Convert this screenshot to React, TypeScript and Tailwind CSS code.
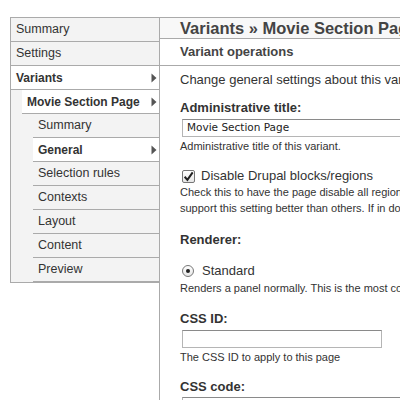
import React from 'react';

type Item = { label: string; level: 0 | 1 | 2; active?: boolean; bold?: boolean; arrow?: boolean };

const items: Item[] = [
  { label: 'Summary', level: 0 },
  { label: 'Settings', level: 0 },
  { label: 'Variants', level: 0, active: true, bold: true, arrow: true },
  { label: 'Movie Section Page', level: 1, active: true, bold: true, arrow: true },
  { label: 'Summary', level: 2 },
  { label: 'General', level: 2, active: true, bold: true, arrow: true },
  { label: 'Selection rules', level: 2 },
  { label: 'Contexts', level: 2 },
  { label: 'Layout', level: 2 },
  { label: 'Content', level: 2 },
  { label: 'Preview', level: 2 },
];

function Arrow() {
  return (
    <svg width="6" height="10" viewBox="0 0 6 10" className="shrink-0">
      <path d="M0.5 0.5 L5.5 5 L0.5 9.5 Z" fill="#555" />
    </svg>
  );
}

function NavRow({ item }: { item: Item }) {
  const indent = item.level === 0 ? '' : item.level === 1 ? 'ml-[11px]' : 'ml-[22px]';
  return (
    <div
      className={`h-[24px] flex items-center justify-between pl-[5px] pr-[2px] border-b border-[#aaa] text-[12.5px] text-[#333] ${indent} ${
        item.active ? 'bg-white' : 'bg-[#f3f3f3]'
      } ${item.bold ? 'font-bold text-[#222] text-[12px]' : ''}`}
    >
      <span>{item.label}</span>
      {item.arrow && <Arrow />}
    </div>
  );
}

export default function App() {
  return (
    <div className="w-[400px] h-[400px] overflow-hidden bg-white pt-[17px] pl-[10px] font-['Liberation_Sans',Arial,sans-serif] text-[#333]">
      <div className="flex border-t border-[#aaa] h-full">
        <nav className="w-[149px] shrink-0 self-start border-l border-b border-[#aaa] bg-[#f3f3f3]">
          {items.map((it, i) => (
            <NavRow key={i} item={it} />
          ))}
        </nav>

        <main className="flex-1 min-w-0 border-l border-[#aaa] whitespace-nowrap overflow-hidden">
          <div className="h-[21px] flex items-center pl-[20px] bg-[#f8f8f8] border-b border-[#aaa] text-[16.5px] font-bold text-[#444]">
            Variants » Movie Section Page
          </div>
          <div className="h-[27px] flex items-center pl-[20px] border-b border-[#aaa] text-[13px] font-bold text-[#444]">
            Variant operations
          </div>

          <div className="pl-[20px]">
            <p className="mt-[6px] text-[13px] leading-[16px]">Change general settings about this variant.</p>

            <div className="mt-[12px] text-[13px] leading-[16px] font-bold">Administrative title:</div>
            <div className="mt-[3px] ml-[2px] h-[18px] w-[260px] border border-[#b5b5b5] border-t-[#8a8a8a] flex items-center pl-[4px] text-[10.5px] text-[#222] font-['DejaVu_Sans',sans-serif]">
              Movie Section Page
            </div>
            <p className="mt-[2px] text-[11px] leading-[14px]">Administrative title of this variant.</p>

            <div className="mt-[15px] flex items-center h-[16px]">
              <span className="ml-[2px] w-[13px] h-[13px] rounded-[2px] border border-[#777] bg-gradient-to-b from-white to-[#e6e6e6] flex items-center justify-center">
                <svg width="11" height="11" viewBox="0 0 10 10">
                  <path d="M1.5 5.2 L4 8 L8.8 1.2" fill="none" stroke="#222" strokeWidth="1.8" />
                </svg>
              </span>
              <span className="ml-[6px] text-[13px]">Disable Drupal blocks/regions</span>
            </div>
            <p className="text-[11px] leading-[16px]">
              Check this to have the page disable all regions displayed in the theme. Note that some themes
              <br />
              support this setting better than others. If in doubt, try with stock themes to test.
            </p>

            <div className="mt-[16px] text-[13px] leading-[16px] font-bold">Renderer:</div>

            <div className="mt-[15px] flex items-center h-[16px]">
              <span className="ml-[2px] w-[12px] h-[12px] rounded-full border border-[#777] bg-gradient-to-b from-white to-[#e6e6e6] flex items-center justify-center">
                <span className="w-[4px] h-[4px] rounded-full bg-[#222]" />
              </span>
              <span className="ml-[8px] text-[13px]">Standard</span>
            </div>
            <p className="mt-[1px] text-[11px] leading-[16px]">
              Renders a panel normally. This is the most common option.
            </p>

            <div className="mt-[15px] text-[13px] leading-[16px] font-bold">CSS ID:</div>
            <div className="mt-[3px] ml-[2px] h-[18px] w-[200px] border border-[#b5b5b5] border-t-[#8a8a8a] bg-white" />
            <p className="mt-[2px] text-[11px] leading-[14px]">The CSS ID to apply to this page</p>

            <div className="mt-[15px] text-[13px] leading-[16px] font-bold">CSS code:</div>
            <div className="mt-[2px] ml-[2px] h-[60px] w-[300px] border border-[#b5b5b5] border-t-[#8a8a8a] bg-white" />
          </div>
        </main>
      </div>
    </div>
  );
}
